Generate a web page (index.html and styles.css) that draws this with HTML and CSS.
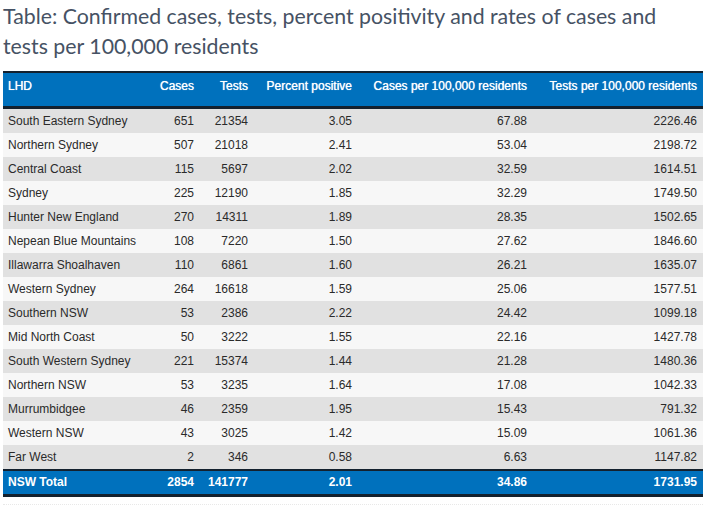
FILE: index.html
```html
<!DOCTYPE html>
<html>
<head>
<meta charset="utf-8">
<link rel="stylesheet" href="styles.css">
</head>
<body>
<h2 class="title">Table: Confirmed cases, tests, percent positivity and rates of cases and tests per 100,000 residents</h2>
<div class="wrap">
<table class="data">
<colgroup>
<col class="c-lhd"><col class="c-cases"><col class="c-tests"><col class="c-pct"><col class="c-cr"><col class="c-tr">
</colgroup>
<thead>
<tr><th class="l">LHD</th><th>Cases</th><th>Tests</th><th>Percent positive</th><th>Cases per 100,000 residents</th><th>Tests per 100,000 residents</th></tr>
</thead>
<tbody>
<tr><td class="l">South Eastern Sydney</td><td>651</td><td>21354</td><td>3.05</td><td>67.88</td><td>2226.46</td></tr>
<tr><td class="l">Northern Sydney</td><td>507</td><td>21018</td><td>2.41</td><td>53.04</td><td>2198.72</td></tr>
<tr><td class="l">Central Coast</td><td>115</td><td>5697</td><td>2.02</td><td>32.59</td><td>1614.51</td></tr>
<tr><td class="l">Sydney</td><td>225</td><td>12190</td><td>1.85</td><td>32.29</td><td>1749.50</td></tr>
<tr><td class="l">Hunter New England</td><td>270</td><td>14311</td><td>1.89</td><td>28.35</td><td>1502.65</td></tr>
<tr><td class="l">Nepean Blue Mountains</td><td>108</td><td>7220</td><td>1.50</td><td>27.62</td><td>1846.60</td></tr>
<tr><td class="l">Illawarra Shoalhaven</td><td>110</td><td>6861</td><td>1.60</td><td>26.21</td><td>1635.07</td></tr>
<tr><td class="l">Western Sydney</td><td>264</td><td>16618</td><td>1.59</td><td>25.06</td><td>1577.51</td></tr>
<tr><td class="l">Southern NSW</td><td>53</td><td>2386</td><td>2.22</td><td>24.42</td><td>1099.18</td></tr>
<tr><td class="l">Mid North Coast</td><td>50</td><td>3222</td><td>1.55</td><td>22.16</td><td>1427.78</td></tr>
<tr><td class="l">South Western Sydney</td><td>221</td><td>15374</td><td>1.44</td><td>21.28</td><td>1480.36</td></tr>
<tr><td class="l">Northern NSW</td><td>53</td><td>3235</td><td>1.64</td><td>17.08</td><td>1042.33</td></tr>
<tr><td class="l">Murrumbidgee</td><td>46</td><td>2359</td><td>1.95</td><td>15.43</td><td>791.32</td></tr>
<tr><td class="l">Western NSW</td><td>43</td><td>3025</td><td>1.42</td><td>15.09</td><td>1061.36</td></tr>
<tr><td class="l">Far West</td><td>2</td><td>346</td><td>0.58</td><td>6.63</td><td>1147.82</td></tr>
</tbody>
<tfoot>
<tr><td class="l">NSW Total</td><td>2854</td><td>141777</td><td>2.01</td><td>34.86</td><td>1731.95</td></tr>
</tfoot>
</table>
</div>
</body>
</html>
```
FILE: styles.css
```css
html, body { margin: 0; padding: 0; background: #ffffff; }
body { padding: 0 3px; width: 700px; }
.title {
  margin: 0;
  padding-top: 1px;
  font-family: Lato, "Open Sans", sans-serif;
  font-weight: 400;
  font-size: 21.3px;
  line-height: 30px;
  color: #465264;
  height: 70px;
}
.wrap { padding-bottom: 7px; border-bottom: 1px dotted #e8e8e8; width: 700px; }
.data {
  border-collapse: collapse;
  table-layout: fixed;
  width: 700px;
  font-family: "Liberation Sans", Arial, sans-serif;
  font-size: 12px;
  color: #2a2a2a;
}
.c-lhd { width: 152px; }
.c-cases { width: 45px; }
.c-tests { width: 54px; }
.c-pct { width: 104px; }
.c-cr { width: 175px; }
.c-tr { width: 170px; }
.data th, .data td { text-align: right; padding: 0 6px 0 0; white-space: nowrap; }
.data .l { text-align: left; padding-left: 5px; }
.data thead th {
  background: #0071bd;
  color: #ffffff;
  font-weight: 400;
  height: 35px;
  vertical-align: top;
  padding-top: 6px;
  box-sizing: border-box;
  border-top: 2px solid #14212e;
  border-bottom: 3px solid #14212e;
  text-shadow: 0 0 0.7px #fff;
}
.data tbody td { height: 24px; }
.data tbody tr:nth-child(odd) td { background: #e1e1e1; }
.data tbody tr:nth-child(even) td { background: #f7f7f7; }
.data tfoot td {
  background: #0071bd;
  color: #ffffff;
  font-weight: 700;
  height: 23px;
  border-top: 2px solid #14212e;
  border-bottom: 3px solid #14212e;
}
```
